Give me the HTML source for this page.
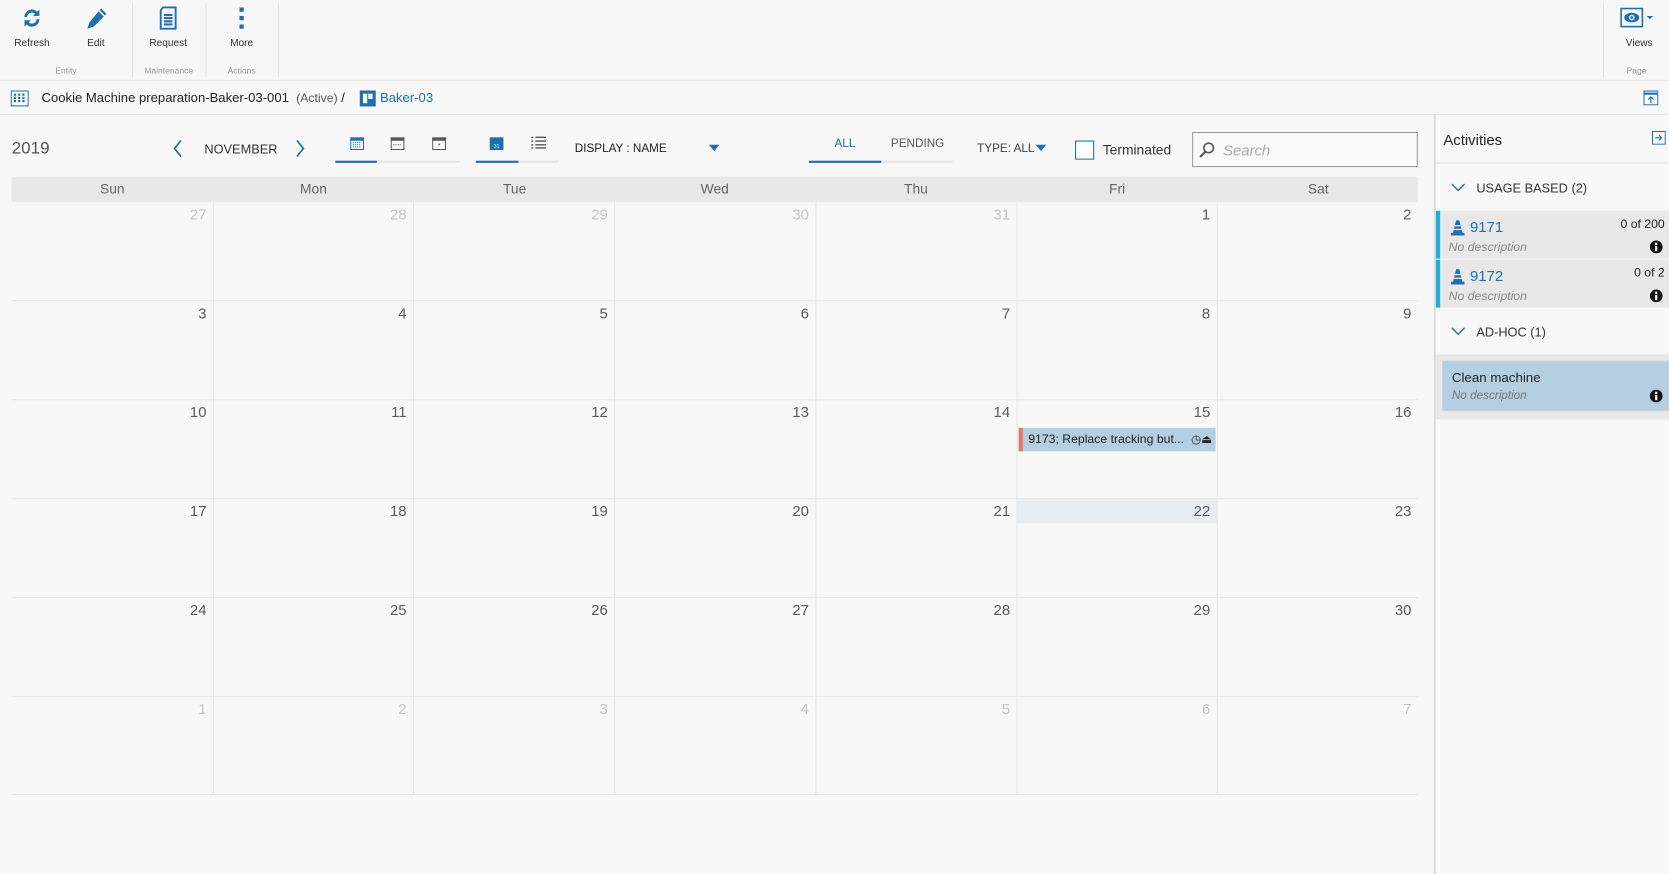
<!DOCTYPE html>
<html><head><meta charset="utf-8"><style>
*{box-sizing:border-box;margin:0;padding:0}
html,body{width:1669px;height:874px;overflow:hidden;background:#f8f8f8}
#w{position:absolute;left:0;top:0;width:1568px;height:821px;transform:scale(1.06441);transform-origin:0 0;font-family:"Liberation Sans",sans-serif;color:#333}
.a{position:absolute}
.tb{left:0;top:0;width:1568px;height:76px;background:#f7f7f7;border-bottom:1px solid #e3e3e3}
.lbl{font-size:9.5px;color:#333;text-align:center;width:60px}
.glb{font-size:8px;color:#999;text-align:center}
.sep{width:1px;background:#e4e4e4;top:3px;height:70px}
.num{position:absolute;right:6px;top:3px;font-size:14px;color:#5a5a5a}
.oth{color:#c4c4c4}
.cell{position:absolute;border-left:1px solid #e7e7e7;border-top:1px solid #e7e7e7}
.dn{position:absolute;top:0;font-size:13px;color:#666;text-align:center}
</style></head><body><div id="w">
<div class="a tb"></div>
<svg class="a" style="left:20px;top:6px" width="20" height="22" viewBox="0 0 20 22"><path d="M3 10a7 7 0 0 1 12-5l2-2v6h-6l2-2a4.5 4.5 0 0 0-7.5 3z M17 12a7 7 0 0 1-12 5l-2 2v-6h6l-2 2a4.5 4.5 0 0 0 7.5-3z" fill="#1f6fb0"/></svg>
<svg class="a" style="left:80px;top:6px" width="22" height="22" viewBox="0 0 22 22"><path d="M15 2l5 5L8 19l-6 2 2-6z" fill="#1f6fb0"/><path d="M13 4l5 5" stroke="#f7f7f7" stroke-width="1.5"/></svg>
<svg class="a" style="left:149px;top:6px" width="18" height="22" viewBox="0 0 18 22"><path d="M4 1h12v20H2V4z" fill="none" stroke="#1f6fb0" stroke-width="1.8"/><path d="M5 8h8M5 11h8M5 14h8M5 17h8" stroke="#1f6fb0" stroke-width="2"/></svg>
<div class="a" style="left:225px;top:7px;width:4px;height:4px;background:#1f6fb0"></div>
<div class="a" style="left:225px;top:15px;width:4px;height:4px;background:#1f6fb0"></div>
<div class="a" style="left:225px;top:23px;width:4px;height:4px;background:#1f6fb0"></div>
<div class="a lbl" style="left:0;top:35px">Refresh</div>
<div class="a lbl" style="left:60px;top:35px">Edit</div>
<div class="a lbl" style="left:128px;top:35px">Request</div>
<div class="a lbl" style="left:197px;top:35px">More</div>
<div class="a glb" style="left:0;top:62px;width:124px">Entity</div>
<div class="a glb" style="left:124px;top:62px;width:69px">Maintenance</div>
<div class="a glb" style="left:193px;top:62px;width:68px">Actions</div>
<div class="a sep" style="left:124px"></div><div class="a sep" style="left:193px"></div><div class="a sep" style="left:261px"></div><div class="a sep" style="left:1506px"></div>
<svg class="a" style="left:1522px;top:7px" width="36" height="20" viewBox="0 0 36 20"><rect x="1" y="1" width="20" height="17" fill="none" stroke="#1f6fb0" stroke-width="1.5"/><ellipse cx="11" cy="9.5" rx="7" ry="4.5" fill="#1f6fb0"/><circle cx="11" cy="9.5" r="2.6" fill="#fff"/><circle cx="11" cy="9.5" r="1.3" fill="#1f6fb0"/><path d="M25 8h6l-3 3z" fill="#1f6fb0"/></svg>
<div class="a lbl" style="left:1510px;top:35px">Views</div>
<div class="a glb" style="left:1507px;top:62px;width:61px">Page</div>
<div class="a" style="left:0;top:107px;width:1568px;height:1px;background:#e3e3e3"></div>
<svg class="a" style="left:10px;top:85px" width="17" height="15" viewBox="0 0 17 15"><rect x=".5" y=".5" width="16" height="14" fill="none" stroke="#1f6fb0"/><path d="M4 3v9M8 3v9M12 3v9" stroke="#1f6fb0" stroke-width="2" stroke-dasharray="2 1"/></svg>
<div class="a" style="left:39px;top:85px;font-size:12.3px;color:#222;white-space:nowrap">Cookie Machine preparation-Baker-03-001 &nbsp;<span style="color:#555;font-size:11.5px">(Active)</span> / </div>
<div class="a" style="left:338px;top:85px;width:15px;height:15px;background:#1f6fb0"><div class="a" style="left:3px;top:3px;width:4px;height:9px;background:#fff"></div><div class="a" style="left:8px;top:3px;width:4px;height:5px;background:#fff"></div></div>
<div class="a" style="left:357px;top:85px;font-size:12.3px;color:#1f6fb0">Baker-03</div>
<svg class="a" style="left:1544px;top:85px" width="14" height="14" viewBox="0 0 14 14"><rect x=".5" y=".5" width="13" height="13" fill="none" stroke="#1f6fb0"/><path d="M1 3h12" stroke="#1f6fb0" stroke-width="2"/><path d="M7 12V6M4.5 8.5L7 6l2.5 2.5" stroke="#1f6fb0" fill="none"/></svg>
<div class="a" style="left:11px;top:131px;font-size:16px;color:#555">2019</div>
<svg class="a" style="left:162px;top:131px" width="10" height="17"><path d="M8 1L2 8.5 8 16" stroke="#1f6fb0" stroke-width="1.6" fill="none"/></svg>
<div class="a" style="left:192px;top:133px;font-size:12px;color:#333">NOVEMBER</div>
<svg class="a" style="left:277px;top:131px" width="10" height="17"><path d="M2 1l6 7.5L2 16" stroke="#1f6fb0" stroke-width="1.6" fill="none"/></svg>
<svg class="a" style="left:329px;top:128px" width="13" height="13"><rect x=".5" y="1.5" width="12" height="11" fill="none" stroke="#1f6fb0"/><path d="M0 3h13" stroke="#1f6fb0" stroke-width="2.5"/><path d="M2.5 6h8M2.5 8h8M2.5 10h8" stroke="#1f6fb0" stroke-dasharray="1 1"/></svg>
<svg class="a" style="left:367px;top:128px" width="13" height="13"><rect x=".5" y="1.5" width="12" height="11" fill="none" stroke="#555"/><path d="M0 3h13" stroke="#555" stroke-width="2.5"/><path d="M2.5 8h8" stroke="#555" stroke-dasharray="1 1"/></svg>
<svg class="a" style="left:406px;top:128px" width="13" height="13"><rect x=".5" y="1.5" width="12" height="11" fill="none" stroke="#555"/><path d="M0 3h13" stroke="#555" stroke-width="2.5"/><rect x="6" y="7" width="1.5" height="1.5" fill="#555"/></svg>
<div class="a" style="left:315px;top:151px;width:117px;height:2px;background:#e6e6e6"></div>
<div class="a" style="left:315px;top:151px;width:39px;height:2px;background:#1f6fb0"></div>
<svg class="a" style="left:460px;top:128px" width="13" height="13"><rect x="0" y="1" width="13" height="12" fill="#1f6fb0"/><text x="6.5" y="11" font-size="5" fill="#fff" text-anchor="middle" font-family="Liberation Sans">31</text></svg>
<svg class="a" style="left:499px;top:128px" width="14" height="12"><path d="M0 1h2M4 1h10M0 4.5h2M4 4.5h10M0 8h2M4 8h10M0 11h2M4 11h10" stroke="#555" stroke-width="1.3"/></svg>
<div class="a" style="left:447px;top:151px;width:78px;height:2px;background:#e6e6e6"></div>
<div class="a" style="left:447px;top:151px;width:40px;height:2px;background:#1f6fb0"></div>
<div class="a" style="left:540px;top:134px;font-size:11px;color:#222">DISPLAY : NAME</div>
<div class="a" style="left:666px;top:136px;border-left:5px solid transparent;border-right:5px solid transparent;border-top:6px solid #1f6fb0"></div>
<div class="a" style="left:784px;top:129px;font-size:11px;color:#1f6fb0">ALL</div>
<div class="a" style="left:837px;top:129px;font-size:11px;color:#555">PENDING</div>
<div class="a" style="left:760px;top:151px;width:135px;height:2px;background:#e6e6e6"></div>
<div class="a" style="left:760px;top:151px;width:68px;height:2px;background:#1f6fb0"></div>
<div class="a" style="left:918px;top:134px;font-size:11px;color:#444">TYPE: ALL</div>
<div class="a" style="left:973px;top:136px;border-left:5px solid transparent;border-right:5px solid transparent;border-top:6px solid #1f6fb0"></div>
<div class="a" style="left:1010px;top:132px;width:18px;height:18px;border:1px solid #1f6fb0;background:#fff"></div>
<div class="a" style="left:1036px;top:133px;font-size:13px;color:#333">Terminated</div>
<div class="a" style="left:1120px;top:124px;width:212px;height:33px;border:1px solid #999;background:#fafafa"></div>
<svg class="a" style="left:1126px;top:133px" width="16" height="16"><circle cx="9.5" cy="6" r="4.5" fill="none" stroke="#555" stroke-width="1.5"/><path d="M6.5 9.5L1.5 14.5" stroke="#555" stroke-width="2"/></svg>
<div class="a" style="left:1149px;top:133px;font-size:14px;color:#aaa;font-style:italic">Search</div>
<div class="a" style="left:11px;top:166px;width:1321px;height:23px;background:#e8e8e8">
<div class="dn" style="left:0;width:189px;top:4px">Sun</div><div class="dn" style="left:189px;width:189px;top:4px">Mon</div><div class="dn" style="left:378px;width:189px;top:4px">Tue</div><div class="dn" style="left:566px;width:189px;top:4px">Wed</div><div class="dn" style="left:755px;width:189px;top:4px">Thu</div><div class="dn" style="left:944px;width:189px;top:4px">Fri</div><div class="dn" style="left:1133px;width:189px;top:4px">Sat</div>
</div>
<div class="a" id="g" style="left:11px;top:189px;width:1321px;height:558px;border-bottom:1px solid #e7e7e7"></div>
<script>
var d=[[27,28,29,30,31,1,2],[3,4,5,6,7,8,9],[10,11,12,13,14,15,16],[17,18,19,20,21,22,23],[24,25,26,27,28,29,30],[1,2,3,4,5,6,7]];
var h='';for(var r=0;r<6;r++)for(var c=0;c<7;c++){var o=(r==0&&c<5)||r==5;var x=Math.round(c*188.7),w=Math.round((c+1)*188.7)-x;
h+='<div class="cell" style="left:'+x+'px;top:'+(r*93)+'px;width:'+w+'px;height:93px;'+(c==0?'border-left:none;':'')+'">'+(r==3&&c==5?'<div class="a" style="left:0;top:0;right:0;height:23px;background:#e7eef3"></div>':'')+'<div class="num'+(o?' oth':'')+'">'+d[r][c]+'</div></div>';}
document.getElementById('g').innerHTML=h;
</script>
<div class="a" style="left:957px;top:402px;width:185px;height:22px;background:#b3cfe1;border-left:4px solid #e07a73">
<div class="a" style="left:5px;top:5px;font-size:11.5px;color:#222;white-space:nowrap">9173; Replace tracking but...</div>
<div class="a" style="left:158px;top:4px;font-size:11px;color:#222">&#9719;&#9167;</div></div>
<div class="a" style="left:1347px;top:108px;width:2px;height:713px;background:#ddd"></div>
<div class="a" style="left:1356px;top:123px;font-size:14px;color:#222">Activities</div>
<svg class="a" style="left:1552px;top:123px" width="13" height="13"><rect x=".5" y=".5" width="12" height="12" fill="none" stroke="#1f6fb0"/><path d="M3 6.5h6M6.5 4l2.5 2.5L6.5 9" stroke="#1f6fb0" fill="none"/></svg>
<div class="a" style="left:1349px;top:152px;width:219px;height:2px;background:#e9e9e9"></div>
<svg class="a" style="left:1363px;top:172px" width="14" height="9"><path d="M1 1l6 6 6-6" stroke="#1f6fb0" stroke-width="1.3" fill="none"/></svg>
<div class="a" style="left:1387px;top:170px;font-size:12px;color:#333">USAGE BASED (2)</div>
<div class="a" style="left:1349px;top:198px;width:219px;height:45px;background:#e8e8e8;border-left:4px solid #1fb0d6"></div>
<div class="a" style="left:1349px;top:244px;width:219px;height:45px;background:#e8e8e8;border-left:4px solid #1fb0d6"></div>
<svg class="a" style="left:1363px;top:206px" width="13" height="16"><path d="M5 1h3l3 12H2z" fill="#1f6fb0"/><path d="M0 14h13" stroke="#1f6fb0" stroke-width="2.5"/><path d="M3.5 6h6M2.8 9.5h7.5" stroke="#e8e8e8" stroke-width="1.3"/></svg>
<svg class="a" style="left:1363px;top:252px" width="13" height="16"><path d="M5 1h3l3 12H2z" fill="#1f6fb0"/><path d="M0 14h13" stroke="#1f6fb0" stroke-width="2.5"/><path d="M3.5 6h6M2.8 9.5h7.5" stroke="#e8e8e8" stroke-width="1.3"/></svg>
<div class="a" style="left:1381px;top:205px;font-size:14px;color:#1f6fb0">9171</div>
<div class="a" style="left:1381px;top:251px;font-size:14px;color:#1f6fb0">9172</div>
<div class="a" style="right:4px;top:205px;font-size:11.5px;color:#222">0 of 200</div>
<div class="a" style="right:4px;top:251px;font-size:11.5px;color:#222">0 of 2</div>
<div class="a" style="left:1361px;top:227px;font-size:11.5px;color:#888;font-style:italic">No description</div>
<div class="a" style="left:1361px;top:273px;font-size:11.5px;color:#888;font-style:italic">No description</div>
<svg class="a" style="left:1550px;top:226px" width="12" height="12"><circle cx="6" cy="6" r="6" fill="#111"/><rect x="5" y="5" width="2" height="5" fill="#fff"/><rect x="5" y="2" width="2" height="2" fill="#fff"/></svg>
<svg class="a" style="left:1550px;top:272px" width="12" height="12"><circle cx="6" cy="6" r="6" fill="#111"/><rect x="5" y="5" width="2" height="5" fill="#fff"/><rect x="5" y="2" width="2" height="2" fill="#fff"/></svg>
<svg class="a" style="left:1363px;top:307px" width="14" height="9"><path d="M1 1l6 6 6-6" stroke="#1f6fb0" stroke-width="1.3" fill="none"/></svg>
<div class="a" style="left:1387px;top:305px;font-size:12px;color:#333">AD-HOC (1)</div>
<div class="a" style="left:1349px;top:333px;width:219px;height:61px;background:#e8e8e8"></div>
<div class="a" style="left:1355px;top:339px;width:213px;height:47px;background:#b3cfe1;border:1px solid #c6d5df"></div>
<div class="a" style="left:1364px;top:348px;font-size:12.5px;color:#222">Clean machine</div>
<div class="a" style="left:1364px;top:366px;font-size:11px;color:#777;font-style:italic">No description</div>
<svg class="a" style="left:1550px;top:366px" width="12" height="12"><circle cx="6" cy="6" r="6" fill="#111"/><rect x="5" y="5" width="2" height="5" fill="#fff"/><rect x="5" y="2" width="2" height="2" fill="#fff"/></svg>
</div></body></html>
